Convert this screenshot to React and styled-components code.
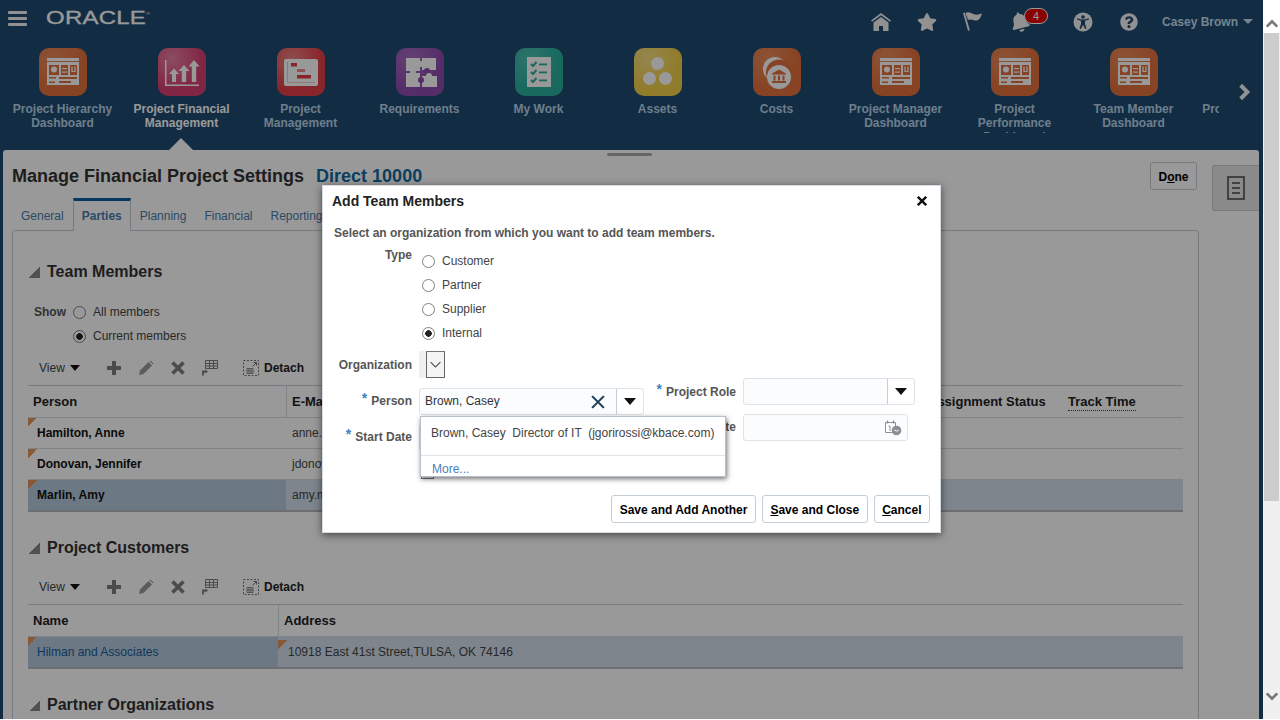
import styled, {createGlobalStyle} from "styled-components";
import {FaBell, FaQuestionCircle, FaStar} from "react-icons/fa";

const GlobalStyle = createGlobalStyle`
  html, body {
    margin: 0;
    background: #fff;
    overflow: hidden;
  }

  body {
    font-family: "Liberation Sans", Arial, sans-serif;
    font-size: 12px;
    color: #333;
  }
`;

const Shell = styled.div`
  display: flex;
  width: 1280px;
  height: 719px;
  overflow: hidden;
`;

const Page = styled.div`
  position: relative;
  width: 1263px;
  height: 719px;
  overflow: hidden;
  background: #1e4a72;
`;

const Dim = styled.div`
  position: absolute;
  inset: 0;
  z-index: 2;
  background: rgba(0, 0, 0, 0.4);
`;

/* ---------- scrollbar ---------- */

const ScrollBar = styled.div`
  width: 17px;
  display: flex;
  flex-direction: column;
  align-items: center;
  background: #f0f0f0;
`;

const ScrollUp = styled.div`
  width: 100%;
  height: 33px;
  background: #fff;
  display: flex;
  justify-content: center;
  padding-top: 17px;
  box-sizing: border-box;
`;

const ScrollThumb = styled.div`
  width: 15px;
  height: 468px;
  background: #cdcdcd;
`;

const ScrollDown = styled.div`
  margin-top: auto;
  padding-bottom: 16px;
  display: flex;
`;

/* ---------- header ---------- */

const Header = styled.header`
  height: 150px;
`;

const TopBar = styled.div`
  display: flex;
  align-items: center;
  height: 44px;
  padding-left: 8px;
  color: #f2f2f2;
`;

const Burger = styled.div`
  width: 19px;
  height: 15px;
  display: flex;
  flex-direction: column;
  justify-content: space-between;
  margin-top: -7px;

  span {
    display: block;
    height: 3px;
    background: #f2f2f2;
    border-radius: 1px;
  }
`;

const Logo = styled.div`
  margin: -9px 0 0 19px;
  width: 103px;
  height: 16px;
  line-height: 16px;
  font-size: 18px;
  color: #fff;
  -webkit-text-stroke: 0.3px #fff;
  transform-origin: left center;
  transform: scaleX(1.33);
  letter-spacing: 0.2px;

  sup {
    font-size: 4px;
    line-height: 0;
    vertical-align: 9px;
    -webkit-text-stroke: 0;
  }
`;

const TopIcons = styled.div`
  display: flex;
  align-items: center;
  margin-left: auto;
  margin-top: -1px;
`;

const IconSlot = styled.div`
  position: relative;
  width: ${p => p.$w || 46}px;
  display: flex;
  justify-content: ${p => (p.$w ? "flex-start" : "center")};
  padding-left: ${p => (p.$w ? 14 : 0)}px;
  box-sizing: border-box;

  ${p => p.$w && `
    > svg {
      transform: rotate(-14deg);
    }
  `}
`;

const Badge = styled.span`
  position: absolute;
  left: 28px;
  top: -4px;
  width: 22px;
  height: 14px;
  border: 1px solid #fff;
  border-radius: 8px;
  background: #e40000;
  color: #fff;
  font-size: 11px;
  line-height: 14px;
  text-align: center;
`;

const UserName = styled.div`
  display: flex;
  align-items: center;
  gap: 5px;
  margin: 0 10px 0 10px;
  font-size: 12px;
  font-weight: 700;
  color: #c3dcee;

  i {
    width: 0;
    height: 0;
    border: 5px solid transparent;
    border-top: 5px solid #c3dcee;
    border-bottom: 0;
  }
`;

const NavRow = styled.nav`
  display: flex;
  height: 106px;
`;

const NavStrip = styled.div`
  display: flex;
  width: 1216px;
  margin-left: 3px;
  overflow: hidden;
`;

const NavItem = styled.div`
  position: relative;
  flex: none;
  width: 119px;
  padding-top: 4px;
  display: flex;
  flex-direction: column;
  align-items: center;

  ${p => p.$active && `
    &::after {
      content: "";
      position: absolute;
      left: 47px;
      bottom: 0;
      border: 12px solid transparent;
      border-top: 0;
      border-bottom-color: #fff;
    }
  `}
`;

const Tile = styled.div`
  width: 48px;
  height: 48px;
  border-radius: 10px;
  background: radial-gradient(circle at 30% 22%, ${p => p.$light}, ${p => p.$color} 62%);

  svg {
    display: block;
  }
`;

const NavLabel = styled.div`
  width: 105px;
  max-height: 31px;
  margin-top: 6px;
  overflow: hidden;
  text-align: center;
  font-weight: 700;
  font-size: 12px;
  line-height: 14px;
  color: ${p => (p.$active ? "#fff" : "#b7d2e6")};
`;

const NavNext = styled.div`
  flex: 1;
  display: flex;
  justify-content: center;
  padding: 39px 0 0 5px;
`;

/* ---------- panel ---------- */

const Panel = styled.div`
  position: relative;
  display: flex;
  width: 1256px;
  height: 569px;
  margin-left: 3px;
  background: #fff;
  border-radius: 3px 3px 0 0;
`;

const Grip = styled.div`
  position: absolute;
  left: 604px;
  top: 3px;
  width: 45px;
  height: 3px;
  border-radius: 2px;
  background: #aaa;
`;

const Main = styled.div`
  width: 1187px;
  padding-left: 9px;
`;

const TitleRow = styled.div`
  display: flex;
  align-items: flex-start;
  padding: 12px 2px 0 0;
  height: 36px;
`;

const PageTitle = styled.h1`
  margin: 4px 0 0;
  font-size: 18px;
  line-height: 20px;
  font-weight: 700;
  color: #333;
`;

const PageLink = styled.span`
  margin: 4px 0 0 12px;
  font-size: 18px;
  line-height: 20px;
  font-weight: 700;
  color: #13699f;
`;

const Button = styled.button`
  height: 28px;
  padding: 1px 7.5px 0;
  border: 1px solid #c4ced7;
  border-radius: 3px;
  background: #fff;
  font-family: inherit;
  font-size: 12px;
  font-weight: 700;
  color: #000;
  margin-left: ${p => (p.$push ? "auto" : "0")};

  u {
    text-decoration: underline;
  }
`;

const Tabs = styled.div`
  display: flex;
  height: 32px;
`;

const Tab = styled.div`
  position: relative;
  height: ${p => (p.$active ? 33 : 32)}px;
  box-sizing: border-box;
  padding: 3px 8px 0;
  display: flex;
  align-items: center;
  font-size: 12px;
  color: #4a7caa;
  border: 1px solid transparent;
  border-width: 0 1px;
  ${p => p.$active && `
    background: #fff;
    font-weight: 700;
    border-color: #c4ced7;
    border-top: 3px solid #0b5aa5;
    padding-top: 0;
    z-index: 1;
  `}
`;

const TabBody = styled.div`
  height: 500px;
  padding: 31px 15px 0;
  border: 1px solid #c4ced7;
  border-radius: 3px 3px 0 0;
`;

const SectionHead = styled.div`
  display: flex;
  align-items: center;
  height: 20px;
  margin-top: ${p => p.$gap || 0}px;
  font-size: 16px;
  font-weight: 700;
  color: #333;

  i {
    width: 11px;
    height: 11px;
    margin: 0 7px 0 1px;
    background: linear-gradient(135deg, transparent 50%, #888 50%);
  }
`;

const ShowBlock = styled.div`
  display: grid;
  grid-template-columns: 39px auto;
  justify-content: start;
  padding: 18px 0 0 6px;
`;

const ShowLabel = styled.div`
  line-height: 24px;
  font-weight: 700;
  color: #555;
`;

const RadioRow = styled.label`
  display: flex;
  align-items: center;
  gap: 7px;
  height: 24px;
  color: #444;
  grid-column: ${p => p.$col || "auto"};
`;

const Radio = styled.span`
  box-sizing: border-box;
  width: 13px;
  height: 13px;
  border: 1px solid #808080;
  border-radius: 50%;
  background: ${p => (p.$on ? "radial-gradient(circle, #222 3px, #fff 3.5px)" : "#fff")};
`;

const Toolbar = styled.div`
  display: flex;
  align-items: center;
  height: 37px;
  margin-top: ${p => p.$gap || 0}px;
  padding: 2px 0 0 11px;
  box-sizing: border-box;
  color: #444;
`;

const ViewMenu = styled.div`
  width: 67px;
  display: flex;
  align-items: center;
  gap: 5px;

  i {
    width: 0;
    height: 0;
    border: 5px solid transparent;
    border-top: 6px solid #111;
    border-bottom: 0;
  }
`;

const ToolIcons = styled.div`
  display: flex;
  gap: 16px;

  svg {
    display: block;
  }
`;

const Detach = styled.div`
  display: flex;
  align-items: center;
  gap: 5px;
  margin-left: 25px;
  font-weight: 700;
  color: #222;
`;

const Table = styled.div`
  border-top: 1px solid #c4ced7;
`;

const Row = styled.div`
  display: grid;
  grid-template-columns: ${p => p.$cols};
  height: ${p => (p.$selected ? 32 : p.$h || 31)}px;
  box-sizing: border-box;
  border-bottom: ${p => (p.$selected ? "2px solid #b4b8bc" : "1px solid #d6dde3")};
`;

const HeadCell = styled.div`
  display: flex;
  align-items: center;
  padding-left: ${p => p.$pad || 5}px;
  font-size: 13px;
  font-weight: 700;
  color: #222;
  border-left: ${p => (p.$line ? "1px solid #d6dde3" : "0")};
`;

const HeadLabel = styled.span`
  border-bottom: 1px dotted #444;
  line-height: 14px;
  padding-bottom: 1px;
  margin-top: 2px;
`;

const Cell = styled.div`
  position: relative;
  display: flex;
  align-items: center;
  padding-left: ${p => p.$pad || 6}px;
  white-space: nowrap;
  overflow: hidden;
  color: ${p => (p.$link ? "#145c9e" : p.$strong ? "#111" : "#444")};
  font-weight: ${p => (p.$strong ? 700 : 400)};
  background: ${p => p.$bg || "transparent"};
  ${p => p.$mark && `
    &::before {
      content: "";
      position: absolute;
      left: 0;
      top: ${p.$markTop || 0}px;
      width: 9px;
      height: 9px;
      background: linear-gradient(135deg, #e2955a 50%, transparent 50%);
    }
  `}
`;

const SideTab = styled.div`
  flex: none;
  width: 47px;
  height: 46px;
  margin: 15px 0 0 13px;
  box-sizing: border-box;
  display: flex;
  align-items: center;
  justify-content: center;
  background: #e6e6e6;
  border: 1px solid #ccc;
  border-right: 0;
  border-radius: 3px 0 0 3px;
`;

/* ---------- dialog ---------- */

const Dialog = styled.div`
  position: absolute;
  z-index: 3;
  left: 322px;
  top: 185px;
  width: 619px;
  height: 348px;
  box-sizing: border-box;
  display: flex;
  flex-direction: column;
  background: #fff;
  border: 1px solid #d5dbe0;
  box-shadow: 0 2px 8px rgba(0, 0, 0, 0.55);
`;

const DialogHead = styled.div`
  display: flex;
  align-items: center;
  justify-content: space-between;
  height: 30px;
  padding: 0 13px 0 9px;
  font-size: 14px;
  font-weight: 700;
  color: #222;
`;

const Instruction = styled.p`
  margin: 9px 0 0 11px;
  line-height: 16px;
  font-size: 12px;
  font-weight: 700;
  color: #555;
`;

const FormColumns = styled.div`
  display: flex;
  padding-top: 6px;
`;

const LeftFields = styled.div`
  width: 328px;
  display: flex;
  flex-direction: column;
`;

const RightFields = styled.div`
  margin-top: 131px;
  display: flex;
  flex-direction: column;
  gap: 9px;
`;

const Field = styled.div`
  display: flex;
  align-items: flex-start;
  margin-top: ${p => p.$gap || 0}px;
`;

const FieldLabel = styled.div`
  flex: none;
  width: ${p => p.$w}px;
  margin-right: ${p => p.$mr}px;
  text-align: right;
  font-weight: 700;
  line-height: 16px;
  padding-top: ${p => p.$top ?? 5}px;
  color: #555;

  b {
    color: #3d7fc4;
    font-size: 14px;
    margin-right: 4px;
    position: relative;
    top: -2px;
  }
`;

const RadioStack = styled.div`
  padding-top: 2px;
  margin-left: 3px;
`;

const OrgSelect = styled.div`
  width: 26px;
  height: 27px;
  background: #f0f0f0;
  display: flex;
  justify-content: flex-end;
`;

const OrgButton = styled.div`
  width: 19px;
  box-sizing: border-box;
  border: 1px solid #666;
  border-top-color: #777;
  display: flex;
  align-items: center;
  justify-content: center;
  background: #f4f4f4;
`;

const InputBox = styled.div`
  display: flex;
  align-items: center;
  width: ${p => p.$w}px;
  height: 27px;
  box-sizing: border-box;
  border: 1px solid #dde3e9;
  border-radius: 3px;
  background: #fafcfe;
  color: #333;
`;

const InputValue = styled.span`
  flex: 1;
  padding: 0 0 1px 5px;
`;

const ClearIcon = styled.span`
  display: flex;
  margin-right: 11px;
`;

const DropButton = styled.div`
  flex: none;
  width: 27px;
  height: 100%;
  box-sizing: border-box;
  border-left: 1px solid #c4ced7;
  background: #fff;
  border-radius: 0 3px 3px 0;
  display: flex;
  align-items: center;
  justify-content: center;

  i {
    width: 0;
    height: 0;
    border: 6px solid transparent;
    border-top: 7px solid #111;
    border-bottom: 0;
  }
`;

const DateIcon = styled.span`
  display: flex;
  margin-right: 5px;
`;

const Check = styled.div`
  width: 13px;
  height: 13px;
  margin: 15px 0 0 98px;
  box-sizing: border-box;
  border: 1px solid #777;
`;

const Suggest = styled.div`
  position: absolute;
  left: 97px;
  top: 230px;
  width: 306px;
  height: 61px;
  box-sizing: border-box;
  background: #fff;
  border: 1px solid #b6c0c9;
  box-shadow: 1px 2px 5px rgba(0, 0, 0, 0.55);
`;

const SuggestItem = styled.div`
  height: 39px;
  padding: 9px 0 0 10px;
  box-sizing: border-box;
  line-height: 15px;
  white-space: pre;
  color: #444;
  border-bottom: 1px solid #dfe3e7;
`;

const SuggestMore = styled.div`
  padding-left: 11px;
  line-height: 27px;
  color: #4d7fb8;
`;

const DialogFoot = styled.div`
  display: flex;
  justify-content: flex-end;
  gap: 6px;
  margin-top: auto;
  padding: 0 10px 9px 0;
`;

/* ---------- drawings ---------- */

function DashGlyph() {
  const c = "#e2703c";
  return (
    <svg width="48" height="48" viewBox="0 0 48 48">
      <rect x="8" y="10" width="32" height="3" fill="#fff"/>
      <rect x="8" y="14" width="32" height="23" fill="#fff"/>
      <rect x="10" y="17" width="10" height="10" fill={c}/>
      <circle cx="15" cy="21.5" r="3" fill="#fff"/>
      <rect x="22" y="17" width="7" height="10" fill={c}/>
      <rect x="23" y="20" width="5" height="1.2" fill="#fff"/>
      <rect x="23" y="23.5" width="5" height="1.2" fill="#fff"/>
      <rect x="31" y="17" width="7" height="10" fill={c}/>
      <path d="M33 18.5v5h3v-5" fill="none" stroke="#fff" strokeWidth="1.2"/>
      <rect x="10" y="29" width="7" height="1.5" fill={c}/>
      <rect x="10" y="33.5" width="6" height="1.5" fill={c}/>
      <rect x="20" y="29" width="18" height="2" fill={c}/>
      <rect x="20" y="33" width="12" height="2" fill={c}/>
    </svg>
  );
}

function ChartGlyph() {
  return (
    <svg width="48" height="48" viewBox="0 0 48 48" fill="#fff">
      <path d="M7 12h1.5v24.500H41V38H7z"/>
      <path d="M11 26l5-5.500 5 5.500h-3v8h-4v-8z"/>
      <path d="M20.500 23l5.500-6 5.500 6h-3.300v11h-4.400V23z"/>
      <path d="M30.500 18.500L36 12l5.500 6.500h-3.300V34h-4.400V18.500z"/>
    </svg>
  );
}

function GanttGlyph() {
  const c = "#e23f46";
  return (
    <svg width="48" height="48" viewBox="0 0 48 48">
      <rect x="7" y="11" width="34" height="27" rx="2" fill="#fff"/>
      <rect x="14" y="15" width="6" height="3.500" fill={c}/>
      <rect x="20" y="21" width="8" height="3" fill="#e98b8f"/>
      <rect x="20" y="27" width="14" height="3.500" fill={c}/>
      <path d="M10.500 14v20.500H38" fill="none" stroke="#f3c3c5" strokeWidth="1"/>
    </svg>
  );
}

function PuzzleGlyph() {
  const c = "#8e4bb0";
  return (
    <svg width="48" height="48" viewBox="0 0 48 48">
      <rect x="10" y="10" width="14" height="13" fill="#fff"/>
      <rect x="26" y="10" width="14" height="12" fill="#fff"/>
      <rect x="10" y="25" width="14" height="14" fill="#fff"/>
      <rect x="26" y="28" width="15" height="11" fill="#fff"/>
      <circle cx="25" cy="16" r="3" fill="#fff"/>
      <circle cx="31" cy="23" r="3" fill={c}/>
      <circle cx="17" cy="24" r="3" fill="#fff"/>
      <circle cx="33" cy="28" r="3" fill="#fff"/>
      <circle cx="25" cy="32" r="3" fill={c}/>
    </svg>
  );
}

function ChecklistGlyph() {
  const c = "#2aaf9f";
  const rows = [16, 24, 32];
  return (
    <svg width="48" height="48" viewBox="0 0 48 48">
      <rect x="12" y="9" width="24" height="30" fill="#fff"/>
      {rows.map(y => (
        <g key={y}>
          <path d={`M16 ${y}l2 2 3.500-4`} fill="none" stroke={c} strokeWidth="2"/>
          <rect x="24" y={y - 0.5} width="8" height="1.800" fill={c}/>
        </g>
      ))}
    </svg>
  );
}

function DotsGlyph() {
  return (
    <svg width="48" height="48" viewBox="0 0 48 48" fill="#fff">
      <circle cx="23.500" cy="15.500" r="6.500"/>
      <circle cx="15.500" cy="30.500" r="6.500"/>
      <circle cx="31.500" cy="30.500" r="6.500"/>
    </svg>
  );
}

function BankGlyph() {
  const c = "#e2703c";
  return (
    <svg width="48" height="48" viewBox="0 0 48 48">
      <circle cx="22" cy="21" r="12" fill="#fff"/>
      <circle cx="26" cy="24.500" r="13" fill={c}/>
      <circle cx="26" cy="29" r="12" fill="#fff"/>
      <path d="M26 21.500l7 4v1H19v-1z" fill={c}/>
      <path d="M20.500 27.500h2v5h-2zM25 27.500h2v5h-2zM29.500 27.500h2v5h-2z" fill={c}/>
      <rect x="19" y="33" width="14" height="2" fill={c}/>
    </svg>
  );
}

function Chevron({dir = "right", size = 14, color = "#f2f2f2", weight = 3}) {
  const d = {
    right: "M5 2l6 6-6 6",
    up: "M2 11l6-6 6 6",
    down: "M2 5l6 6 6-6",
  }[dir];
  return (
    <svg width={size} height={size} viewBox="0 0 16 16">
      <path d={d} fill="none" stroke={color} strokeWidth={weight}/>
    </svg>
  );
}

function HomeIcon() {
  return (
    <svg width="20" height="18" viewBox="0 0 20 18" fill="#f2f2f2">
      <path d="M10 0L0 7.500l1 1.200L10 2.300l9 6.400 1-1.200z"/>
      <path d="M10 4L2.500 9.500V18H8v-5h4v5h5.500V9.500z"/>
    </svg>
  );
}

function FlagIcon() {
  return (
    <svg width="20" height="19" viewBox="0 0 20 19" fill="#f2f2f2">
      <path d="M0 1l1.800-.5L6.800 18.300 5 18.800z"/>
      <path d="M2.500 1C6-1 9 2 12 2.500c3 .5 5-.5 7-1-1 3.500-3 6.500-5 7-3 .5-6-2-9-.5z"/>
    </svg>
  );
}

function AccessIcon() {
  const bg = "#1e4a72";
  return (
    <svg width="20" height="20" viewBox="0 0 20 20">
      <circle cx="10" cy="10" r="9.500" fill="#f2f2f2"/>
      <circle cx="10" cy="5" r="1.800" fill={bg}/>
      <path d="M4 7.500l4 1.200v3.300L6.500 16.500l1.300.5L10 12.800l2.200 4.200 1.300-.5L12 12V8.700l4-1.200-.3-1.200-4.200 1.100H8.500L4.300 6.300z" fill={bg}/>
    </svg>
  );
}

function PlusIcon() {
  return (
    <svg width="16" height="16" viewBox="0 0 16 16" fill="#7d7d7d">
      <path d="M6 1h4v5h5v4h-5v5H6v-5H1V6h5z"/>
    </svg>
  );
}

function PencilIcon() {
  return (
    <svg width="16" height="16" viewBox="0 0 16 16" fill="#9a9a9a">
      <path d="M1 15l1-4.500L10.500 2 14 5.500 5.500 14z"/>
      <path d="M11.500 1l1-.5 3 3-.5 1z"/>
    </svg>
  );
}

function CrossIcon() {
  return (
    <svg width="16" height="16" viewBox="0 0 16 16">
      <path d="M2.500 2.500l11 11M13.500 2.500l-11 11" stroke="#7d7d7d" strokeWidth="3.600" fill="none"/>
    </svg>
  );
}

function FreezeIcon() {
  return (
    <svg width="16" height="16" viewBox="0 0 16 16" fill="none" stroke="#7d7d7d">
      <path d="M3.500 .5h12v8h-12zM3.500 3.500h12M3.500 6h12M7.500 .5v8M11.500 .5v8"/>
      <path d="M1 15.500V11.500h3" strokeWidth="1.800"/>
      <path d="M3.500 9.500l2.500 2-2.500 2z" fill="#7d7d7d" stroke="none"/>
    </svg>
  );
}

function DetachIcon() {
  return (
    <svg width="16" height="16" viewBox="0 0 16 16" fill="none" stroke="#777">
      <path d="M.5 .5h15v15H.5z" strokeDasharray="2 1.500"/>
      <path d="M9.500 6.500l4-4M10.500 2.500h3v3"/>
      <path d="M4 8.500h6v5H4zM4 11h6M6 8.500v5M8 8.500v5" strokeWidth=".8"/>
    </svg>
  );
}

function Toolset({gap}) {
  return (
    <Toolbar $gap={gap}>
      <ViewMenu>View <i/></ViewMenu>
      <ToolIcons>
        <PlusIcon/>
        <PencilIcon/>
        <CrossIcon/>
        <FreezeIcon/>
      </ToolIcons>
      <Detach><DetachIcon/>Detach</Detach>
    </Toolbar>
  );
}

function CloseIcon({size = 10, color = "#111", weight = 2.400}) {
  return (
    <svg width={size} height={size} viewBox="0 0 10 10">
      <path d="M.8 .8l8.400 8.400M9.200 .8L.8 9.200" stroke={color} strokeWidth={weight} fill="none"/>
    </svg>
  );
}

function CalendarIcon() {
  return (
    <svg width="18" height="16" viewBox="0 0 18 16">
      <path d="M1.500 2.500h10v10h-10z" fill="#fff" stroke="#8a8f94"/>
      <path d="M3.500 .5v3M9.500 .5v3" stroke="#8a8f94" strokeWidth="1.400"/>
      <path d="M4.500 6h1.500v5" fill="none" stroke="#8a8f94"/>
      <circle cx="12.500" cy="10.500" r="4.800" fill="#8a8f94"/>
      <path d="M10.500 10l2.200 1 2-.6" fill="none" stroke="#fff"/>
    </svg>
  );
}

function NotesIcon() {
  return (
    <svg width="18" height="24" viewBox="0 0 18 24" fill="none" stroke="#6f6f6f">
      <path d="M1 1h16v22H1z" strokeWidth="2"/>
      <path d="M5 7h8M5 12h8M5 17h8" strokeWidth="2"/>
    </svg>
  );
}

/* ---------- data ---------- */

const ORANGE = {$color: "#e2703c", $light: "#ea8a5a"};

const navItems = [
  {label: "Project Hierarchy Dashboard", tile: ORANGE, Glyph: DashGlyph},
  {label: "Project Financial Management", tile: {$color: "#d63f72", $light: "#ea7fa2"}, Glyph: ChartGlyph, active: true},
  {label: "Project Management", tile: {$color: "#e23f46", $light: "#ee8083"}, Glyph: GanttGlyph},
  {label: "Requirements", tile: {$color: "#8e4bb0", $light: "#a56cc2"}, Glyph: PuzzleGlyph},
  {label: "My Work", tile: {$color: "#2aaf9f", $light: "#4cc0b2"}, Glyph: ChecklistGlyph},
  {label: "Assets", tile: {$color: "#f0cf48", $light: "#f8df85"}, Glyph: DotsGlyph},
  {label: "Costs", tile: ORANGE, Glyph: BankGlyph},
  {label: "Project Manager Dashboard", tile: ORANGE, Glyph: DashGlyph},
  {label: "Project Performance Dashboard", tile: ORANGE, Glyph: DashGlyph},
  {label: "Team Member Dashboard", tile: ORANGE, Glyph: DashGlyph},
  {label: "Project Reporting", tile: ORANGE, Glyph: DashGlyph},
];

const TEAM_COLS = "258px 637px 136px 87px 37px";
const CUSTOMER_COLS = "250px 1fr";
const SELECTED_DARK = "#b4c9da";
const SELECTED_LIGHT = "#d2deea";

const teamRows = [
  {name: "Hamilton, Anne", mail: "anne.hamilton@kbace.com"},
  {name: "Donovan, Jennifer", mail: "jdonovan@kbace.com"},
  {name: "Marlin, Amy", mail: "amy.marlin@kbace.com", selected: true},
];

function App() {
  return (
    <Shell>
      <GlobalStyle/>
      <Page>
        <Header>
          <TopBar>
            <Burger><span/><span/><span/></Burger>
            <Logo>ORACLE<sup>®</sup></Logo>
            <TopIcons>
              <IconSlot><HomeIcon/></IconSlot>
              <IconSlot><FaStar size={20}/></IconSlot>
              <IconSlot><FlagIcon/></IconSlot>
              <IconSlot $w={64}>
                <FaBell size={20}/>
                <Badge>4</Badge>
              </IconSlot>
              <IconSlot><AccessIcon/></IconSlot>
              <IconSlot><FaQuestionCircle size={18}/></IconSlot>
              <UserName>Casey Brown <i/></UserName>
            </TopIcons>
          </TopBar>
          <NavRow>
            <NavStrip>
              {navItems.map(({label, tile, Glyph, active}, i) => (
                <NavItem key={i} $active={active}>
                  <Tile {...tile}><Glyph/></Tile>
                  <NavLabel $active={active}>{label}</NavLabel>
                </NavItem>
              ))}
            </NavStrip>
            <NavNext><Chevron size={18} weight={3.500}/></NavNext>
          </NavRow>
        </Header>

        <Panel>
          <Grip/>
          <Main>
            <TitleRow>
              <PageTitle>Manage Financial Project Settings</PageTitle>
              <PageLink>Direct 10000</PageLink>
              <Button $push>D<u>o</u>ne</Button>
            </TitleRow>
            <Tabs>
              <Tab>General</Tab>
              <Tab $active>Parties</Tab>
              <Tab>Planning</Tab>
              <Tab>Financial</Tab>
              <Tab>Reporting</Tab>
            </Tabs>
            <TabBody>
              <SectionHead><i/>Team Members</SectionHead>
              <ShowBlock>
                <ShowLabel>Show</ShowLabel>
                <RadioRow><Radio/>All members</RadioRow>
                <RadioRow $col="2"><Radio $on/>Current members</RadioRow>
              </ShowBlock>
              <Toolset/>
              <Table>
                <Row $cols={TEAM_COLS} $h={32}>
                  <HeadCell>Person</HeadCell>
                  <HeadCell $line>E-Mail</HeadCell>
                  <HeadCell>Assignment Status</HeadCell>
                  <HeadCell $pad={9}><HeadLabel>Track Time</HeadLabel></HeadCell>
                  <HeadCell/>
                </Row>
                {teamRows.map(r => (
                  <Row key={r.name} $cols={TEAM_COLS} $selected={r.selected}>
                    <Cell $mark $strong $pad={9} $bg={r.selected ? SELECTED_DARK : ""}>{r.name}</Cell>
                    <Cell $bg={r.selected ? SELECTED_LIGHT : ""}>{r.mail}</Cell>
                    <Cell $bg={r.selected ? SELECTED_LIGHT : ""}/>
                    <Cell $bg={r.selected ? SELECTED_LIGHT : ""}/>
                    <Cell $bg={r.selected ? SELECTED_LIGHT : ""}/>
                  </Row>
                ))}
              </Table>

              <SectionHead $gap={26}><i/>Project Customers</SectionHead>
              <Toolset gap={9}/>
              <Table>
                <Row $cols={CUSTOMER_COLS} $h={32}>
                  <HeadCell>Name</HeadCell>
                  <HeadCell $line>Address</HeadCell>
                </Row>
                <Row $cols={CUSTOMER_COLS} $selected>
                  <Cell $mark $link $pad={9} $bg={SELECTED_DARK}>Hilman and Associates</Cell>
                  <Cell $mark $markTop={3} $pad={10} $bg={SELECTED_LIGHT}>10918 East 41st Street,TULSA, OK 74146</Cell>
                </Row>
              </Table>

              <SectionHead $gap={26}><i/>Partner Organizations</SectionHead>
            </TabBody>
          </Main>
          <SideTab><NotesIcon/></SideTab>
        </Panel>

        <Dim/>

        <Dialog>
          <DialogHead>
            Add Team Members
            <CloseIcon/>
          </DialogHead>
          <Instruction>Select an organization from which you want to add team members.</Instruction>
          <FormColumns>
            <LeftFields>
              <Field>
                <FieldLabel $w={89} $mr={7} $top={0}>Type</FieldLabel>
                <RadioStack>
                  <RadioRow><Radio/>Customer</RadioRow>
                  <RadioRow><Radio/>Partner</RadioRow>
                  <RadioRow><Radio/>Supplier</RadioRow>
                  <RadioRow><Radio $on/>Internal</RadioRow>
                </RadioStack>
              </Field>
              <Field $gap={6}>
                <FieldLabel $w={89} $mr={7} $top={6}>Organization</FieldLabel>
                <OrgSelect>
                  <OrgButton><Chevron dir="down" size={13} color="#555" weight={1.500}/></OrgButton>
                </OrgSelect>
              </Field>
              <Field $gap={10}>
                <FieldLabel $w={89} $mr={7} $top={4}><b>*</b>Person</FieldLabel>
                <InputBox $w={225}>
                  <InputValue>Brown, Casey</InputValue>
                  <ClearIcon><CloseIcon size={14} color="#1c3d58" weight={1.500}/></ClearIcon>
                  <DropButton><i/></DropButton>
                </InputBox>
              </Field>
              <Field $gap={9}>
                <FieldLabel $w={89} $mr={7} $top={4}><b>*</b>Start Date</FieldLabel>
                <InputBox $w={165}/>
              </Field>
              <Check/>
            </LeftFields>
            <RightFields>
              <Field>
                <FieldLabel $w={85} $mr={7}><b>*</b>Project Role</FieldLabel>
                <InputBox $w={172}>
                  <InputValue/>
                  <DropButton><i/></DropButton>
                </InputBox>
              </Field>
              <Field>
                <FieldLabel $w={85} $mr={7}>Finish Date</FieldLabel>
                <InputBox $w={165}>
                  <InputValue/>
                  <DateIcon><CalendarIcon/></DateIcon>
                </InputBox>
              </Field>
            </RightFields>
          </FormColumns>
          <Suggest>
            <SuggestItem>{"Brown, Casey  Director of IT  (jgorirossi@kbace.com)"}</SuggestItem>
            <SuggestMore>More...</SuggestMore>
          </Suggest>
          <DialogFoot>
            <Button>Save and Add Another</Button>
            <Button><u>S</u>ave and Close</Button>
            <Button><u>C</u>ancel</Button>
          </DialogFoot>
        </Dialog>
      </Page>

      <ScrollBar>
        <ScrollUp><Chevron dir="up" size={14} color="#777" weight={3}/></ScrollUp>
        <ScrollThumb/>
        <ScrollDown><Chevron dir="down" size={14} color="#777" weight={3}/></ScrollDown>
      </ScrollBar>
    </Shell>
  );
}

export default App;
